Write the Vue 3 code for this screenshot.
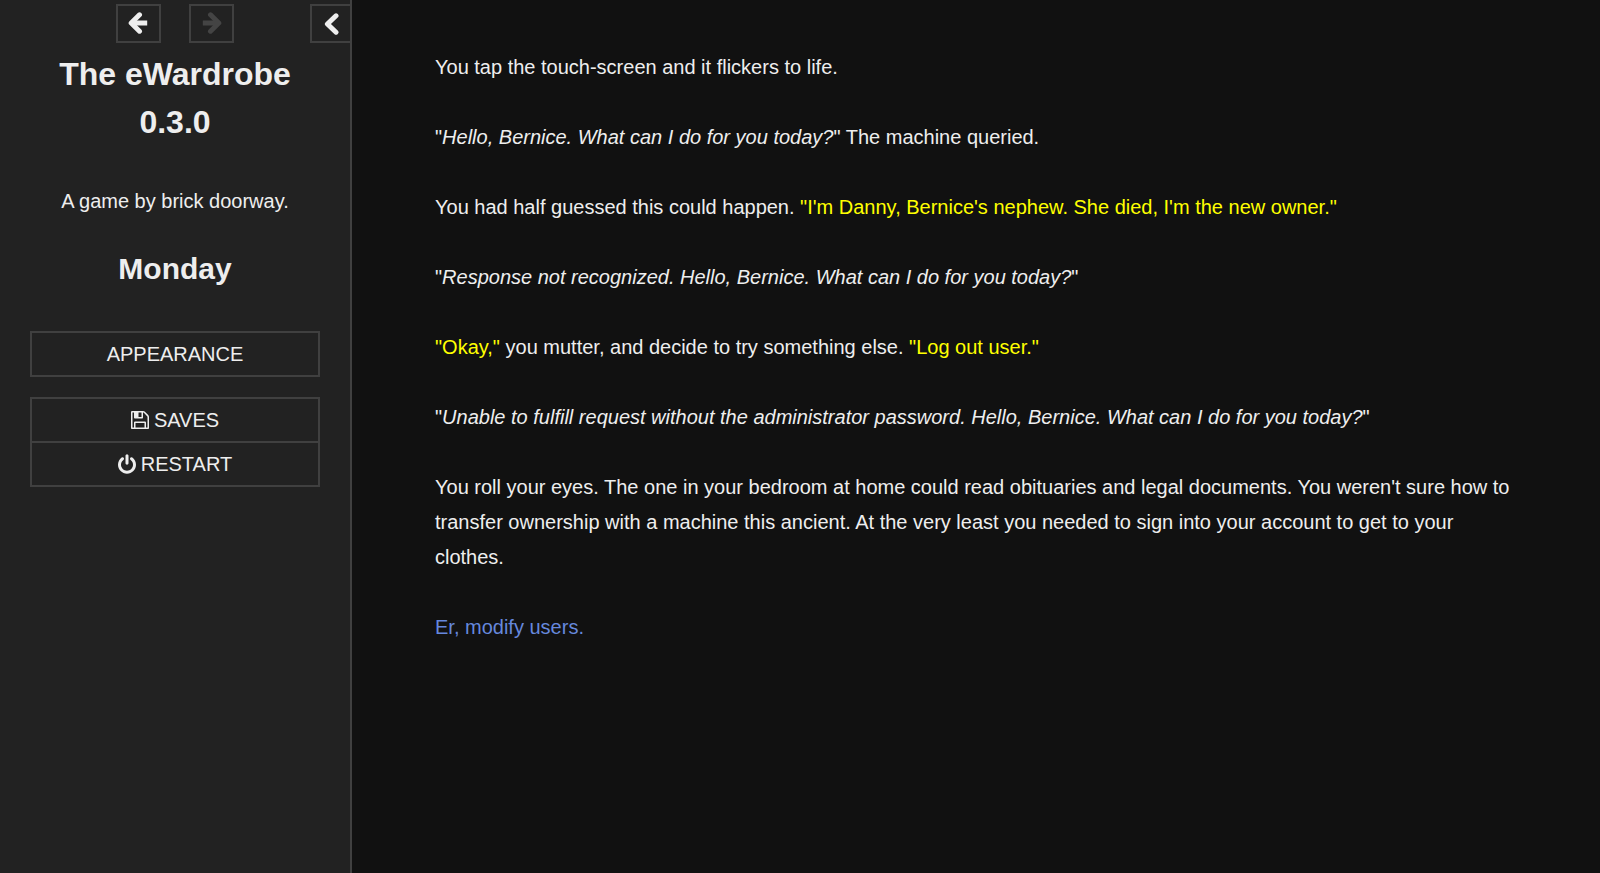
<script setup>
import { ref } from 'vue'

const stowed = ref(false)
</script>

<template>
  <div class="app">
    <aside class="sidebar" :class="{ stowed }">
      <div class="tray">
        <span></span>
        <nav class="history" aria-label="History">
          <button type="button" aria-label="Go backward">
            <svg class="arrow" viewBox="0 0 21 22" aria-hidden="true">
              <path d="M11.5 2.8L3.2 11L11.5 19.2" />
              <path class="shaft" d="M4 11H19.2" />
            </svg>
          </button>
          <button type="button" aria-label="Go forward" disabled>
            <svg class="arrow" viewBox="0 0 21 22" aria-hidden="true">
              <path d="M9.5 2.8L17.8 11L9.5 19.2" />
              <path class="shaft" d="M17 11H1.8" />
            </svg>
          </button>
        </nav>
        <button type="button" class="toggle" aria-label="Toggle the UI bar" @click="stowed = !stowed">
          <svg class="chevron" viewBox="0 0 15 22" aria-hidden="true">
            <path d="M12 2.8L3.4 11L12 19.2" />
          </svg>
        </button>
      </div>

      <div class="body">
        <h1>The eWardrobe 0.3.0</h1>
        <p class="author">A game by brick doorway.</p>
        <h2>Monday</h2>
        <ul class="menu">
          <li><button type="button">APPEARANCE</button></li>
        </ul>
        <ul class="menu">
          <li>
            <button type="button">
              <svg class="icon" viewBox="0 128 1536 1536" aria-hidden="true">
                <path d="M384 1536h768v-384h-768v384zm896 0h128v-896q0-14-10-38.5t-20-34.5l-281-281q-10-10-34-20t-39-10v416q0 40-28 68t-68 28h-576q-40 0-68-28t-28-68v-416h-128v1280h128v-416q0-40 28-68t68-28h832q40 0 68 28t28 68v416zm-384-928v-320q0-13-9.5-22.5t-22.5-9.5h-192q-13 0-22.5 9.5t-9.5 22.5v320q0 13 9.5 22.5t22.5 9.5h192q13 0 22.5-9.5t9.5-22.5zm640 32v928q0 40-28 68t-68 28h-1344q-40 0-68-28t-28-68v-1344q0-40 28-68t68-28h928q40 0 88 20t76 48l280 280q28 28 48 76t20 88z" />
              </svg>
              SAVES
            </button>
          </li>
          <li>
            <button type="button">
              <svg class="icon power" viewBox="0 0 1536 1664" aria-hidden="true">
                <path d="M1536 896q0 156-61 298t-164 245-245 164-298 61-298-61-245-164-164-245-61-298q0-182 80.5-343t226.5-270q43-32 95.5-25t83.5 50q32 42 24.5 94.5t-49.5 84.5q-98 74-151.5 181t-53.5 228q0 104 40.5 198.5t109.5 163.5 163.5 109.5 198.5 40.5 198.5-40.5 163.5-109.5 109.5-163.5 40.5-198.5q0-121-53.5-228t-151.5-181q-42-32-49.5-84.5t24.5-94.5q31-43 84-50t95 25q146 109 226.5 270t80.5 343zm-640-768v640q0 52-38 90t-90 38-90-38-38-90v-640q0-52 38-90t90-38 90 38 38 90z" />
              </svg>
              RESTART
            </button>
          </li>
        </ul>
      </div>
    </aside>

    <main class="story">
      <p>You tap the touch-screen and it flickers to life.</p>
      <p>"<em>Hello, Bernice. What can I do for you today?</em>" The machine queried.</p>
      <p>You had half guessed this could happen. <span class="speech">"I'm Danny, Bernice's nephew. She died, I'm the new owner."</span></p>
      <p>"<em>Response not recognized. Hello, Bernice. What can I do for you today?</em>"</p>
      <p><span class="speech">"Okay,"</span> you mutter, and decide to try something else. <span class="speech">"Log out user."</span></p>
      <p>"<em>Unable to fulfill request without the administrator password. Hello, Bernice. What can I do for you today?</em>"</p>
      <p>You roll your eyes. The one in your bedroom at home could read obituaries and legal documents. You weren't sure how to transfer ownership with a machine this ancient. At the very least you needed to sign into your account to get to your clothes.</p>
      <p><a href="#modify-users">Er, modify users.</a></p>
    </main>
  </div>
</template>

<style>
body {
  margin: 0;
  background: #111;
}
</style>

<style scoped>
.app {
  display: flex;
  min-height: 100vh;
  color: #eee;
  font: 20px/35px "Liberation Sans", Arial, sans-serif;
}

.sidebar {
  box-sizing: border-box;
  flex: 0 0 352px;
  background: #222;
  border-right: 2px solid #404040;
  text-align: center;
}

.sidebar.stowed {
  flex-basis: 42px;
}

.stowed .body,
.stowed .history {
  display: none;
}

button {
  display: flex;
  align-items: center;
  justify-content: center;
  box-sizing: border-box;
  margin: 0;
  padding: 0;
  border: 2px solid #404040;
  background: transparent;
  color: inherit;
  font: inherit;
  cursor: pointer;
}

button:disabled {
  color: #444;
  cursor: default;
}

svg {
  fill: currentColor;
}

.tray {
  display: grid;
  grid-template-columns: 1fr auto 1fr;
  padding-top: 4px;
}

.history {
  display: flex;
  gap: 28px;
}

.history button {
  width: 45px;
  height: 39px;
  padding-bottom: 2px;
}

.toggle {
  justify-self: end;
  width: 40px;
  height: 39px;
  border-right: 0;
}

.arrow,
.chevron {
  height: 22px;
  fill: none;
  stroke: currentColor;
  stroke-width: 5;
  stroke-linecap: round;
  stroke-linejoin: round;
}

.arrow {
  width: 21px;
}

.arrow .shaft {
  stroke-linecap: butt;
}

.chevron {
  width: 15px;
}

.body {
  padding: 7px 30px;
}

h1 {
  margin: 0 24px;
  font-size: 32px;
  line-height: 48px;
}

.author {
  margin: 38px 0 0;
}

h2 {
  margin: 28px 0 0;
  font-size: 30px;
  line-height: 44px;
}

.menu {
  margin: 40px 0 0;
  padding: 0;
  border: 2px solid #404040;
  list-style: none;
}

.menu + .menu {
  margin-top: 20px;
}

.menu li + li {
  border-top: 2px solid #404040;
}

.menu button {
  gap: 5px;
  width: 100%;
  height: 42px;
  border: 0;
}

.icon {
  width: 18px;
  height: 18px;
}

.icon.power {
  height: 20px;
}

.story {
  flex: 1;
  padding: 50px 83px;
}

.story p {
  margin: 0 0 35px;
}

.speech {
  color: #ff0;
}

a {
  color: #68d;
  text-decoration: none;
}

a:hover {
  color: #8af;
  text-decoration: underline;
}
</style>
